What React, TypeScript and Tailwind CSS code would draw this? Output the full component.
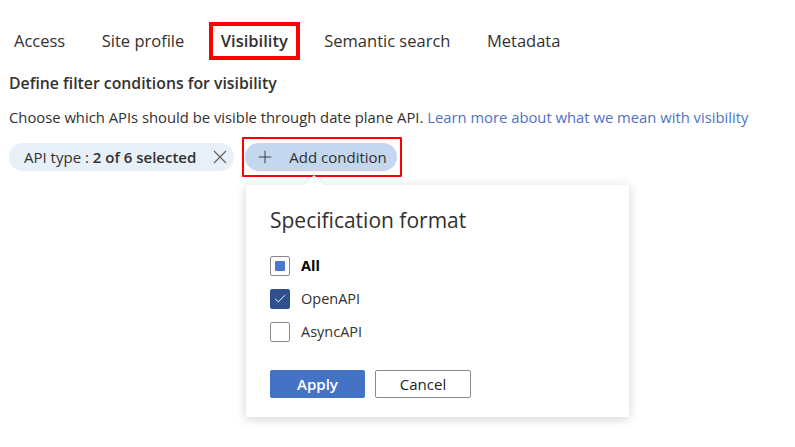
import React from 'react';
import { Plus, Check } from 'lucide-react';

const TABS = ['Access', 'Site profile', 'Visibility', 'Semantic search', 'Metadata'];

function Tab({ label, active }: { label: string; active: boolean }) {
  return (
    <div
      className={
        'flex h-[38px] items-center border-4 px-2 text-[16.5px] ' +
        (active ? 'border-[#ff0000] font-semibold text-[#323130]' : 'border-transparent text-[#323130]')
      }
    >
      {label}
    </div>
  );
}

function Box({ state }: { state: 'mixed' | 'checked' | 'empty' }) {
  if (state === 'checked') {
    return (
      <span className="flex h-[20px] w-[20px] items-center justify-center rounded-[2px] bg-[#2f4f8f]">
        <Check className="h-[14px] w-[14px] text-white" strokeWidth={1.6} />
      </span>
    );
  }
  return (
    <span className="flex h-[20px] w-[20px] items-center justify-center rounded-[2px] border border-[#8a8886] bg-white">
      {state === 'mixed' && <span className="h-[10px] w-[10px] rounded-[1px] bg-[#4a76d0]" />}
    </span>
  );
}

export default function App() {
  return (
    <div
      className="h-[447px] w-[795px] overflow-hidden bg-white text-[#323130]"
      style={{ fontFamily: '"Open Sans", "Noto Sans", sans-serif' }}
    >
      <div className="flex items-center gap-[12.5px] pl-[2px] pt-[22px]">
        {TABS.map((t) => (
          <Tab key={t} label={t} active={t === 'Visibility'} />
        ))}
      </div>

      <div className="px-[9px]">
        <div className="mt-[13px] text-[15.8px] font-semibold leading-[20px]">Define filter conditions for visibility</div>
        <div className="mt-[14px] text-[14.8px] leading-[20px]">
          Choose which APIs should be visible through date plane API.{' '}
          <span className="text-[#4f72c8]">Learn more about what we mean with visibility</span>
        </div>

        <div className="mt-[16px] flex items-center">
          <div className="flex h-[28px] items-center gap-[17px] rounded-full bg-[#e7eff9] pl-[15px] pr-[7px] text-[15px]">
            <span>
              API type : <span className="font-semibold">2 of 6 selected</span>
            </span>
            <svg width="14" height="14" viewBox="0 0 14 14" className="text-[#605e5c]">
              <path d="M1 1 L13 13 M13 1 L1 13" stroke="currentColor" strokeWidth="1.1" fill="none" />
            </svg>
          </div>
          <div className="-my-[6px] ml-[8px] rounded-[1px] border-2 border-[#ff0000] py-[4px] pl-[1px] pr-[3px]">
            <div className="flex h-[28px] items-center gap-[16px] rounded-full bg-[#c3d7ef] pl-[12px] pr-[10px] text-[15px]">
              <Plus className="h-[20px] w-[20px] -mx-[2px] text-[#323130]" strokeWidth={1.1} />
              <span>Add condition</span>
            </div>
          </div>
        </div>

        <div className="relative ml-[237px] mt-[14px] w-[383px] bg-white px-[24px] pb-[19px] pt-[21px] shadow-[0_2px_10px_rgba(0,0,0,0.18)]">
          <div className="absolute -top-[7px] left-[61px] h-[14px] w-[14px] rotate-45 bg-white shadow-[-2px_-2px_4px_rgba(0,0,0,0.06)]" />
          <div className="relative text-[21px] leading-[28px]">Specification format</div>
          <div className="relative mt-[22px] flex flex-col gap-[13px] text-[14.5px] leading-[20px]">
            <label className="flex items-center gap-[11px]">
              <Box state="mixed" />
              <span className="font-bold text-black">All</span>
            </label>
            <label className="flex items-center gap-[11px]">
              <Box state="checked" />
              <span>OpenAPI</span>
            </label>
            <label className="flex items-center gap-[11px]">
              <Box state="empty" />
              <span>AsyncAPI</span>
            </label>
          </div>
          <div className="relative mt-[28px] flex gap-[10px]">
            <button className="h-[28px] w-[95px] rounded-[2px] bg-[#4472c4] text-[15px] font-semibold text-white">
              Apply
            </button>
            <button className="h-[28px] w-[96px] rounded-[2px] border border-[#8a8886] bg-white text-[15px] text-[#201f1e]">
              Cancel
            </button>
          </div>
        </div>
      </div>
    </div>
  );
}
